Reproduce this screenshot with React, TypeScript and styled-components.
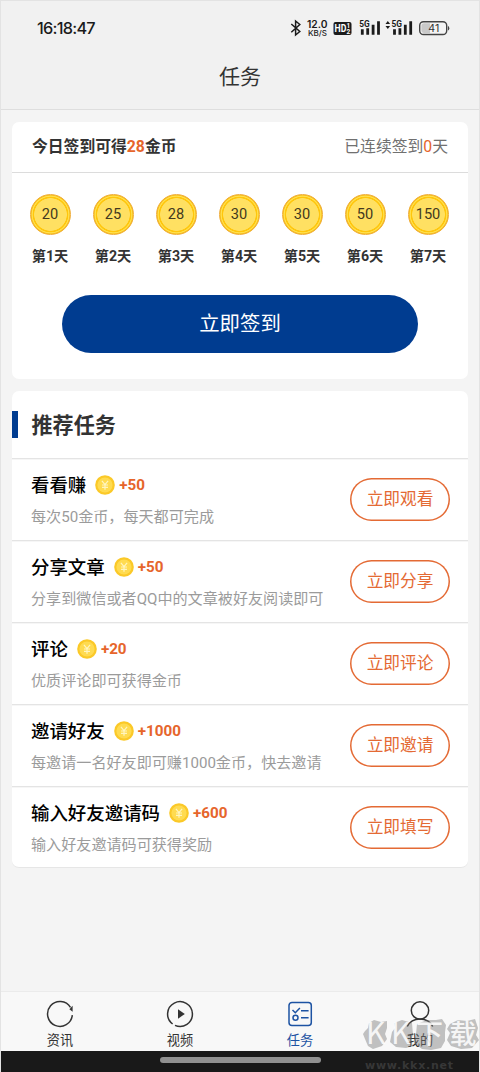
import React from 'react';
import styled, { createGlobalStyle } from 'styled-components';

const GlobalStyle = createGlobalStyle`
  * { box-sizing: border-box; }
  body {
    margin: 0;
    background: #f4f4f4;
    font-family: Roboto, 'Noto Sans CJK SC', sans-serif;
  }
`;

const Screen = styled.div`
  position: relative;
  display: flex;
  flex-direction: column;
  width: 480px;
  height: 1072px;
  overflow: hidden;
  background: #f4f4f4;
  border: 1px solid #e3e3e3;
  border-bottom: 0;
`;

const TopArea = styled.header`
  height: 109px;
  background: #f1f1f1;
  border-bottom: 1px solid #dedede;
`;

const StatusBar = styled.div`
  display: flex;
  align-items: center;
  justify-content: space-between;
  height: 54px;
  padding: 0 29px 0 36px;
`;

const Clock = styled.span`
  font: 500 16.3px/20px Inter, sans-serif;
  letter-spacing: -0.75px;
  color: #1b1b1b;
`;

const StatusIcons = styled.svg`
  display: block;
  width: 160px;
  height: 20px;
`;

const PageTitle = styled.h1`
  margin: 0;
  font-size: 21px;
  font-weight: 400;
  line-height: 45px;
  text-align: center;
  color: #333;
`;

const Content = styled.main`
  flex: 1;
  display: flex;
  flex-direction: column;
  gap: 12px;
  padding: 12px 11px 0;
`;

const Card = styled.section`
  background: #fff;
  border-radius: 7px;
`;

const CheckInCard = styled(Card)`
  height: 257px;
`;

const TaskCard = styled(Card)`
  height: 477px;
  overflow: hidden;
  border-bottom: 1px solid #e6e6e6;
`;

const CheckInHead = styled.div`
  display: flex;
  justify-content: space-between;
  align-items: center;
  height: 51px;
  padding: 0 20px 3px;
  border-bottom: 1px solid #dcdcdc;
`;

const TodayReward = styled.span`
  font-size: 15.8px;
  font-weight: 700;
  color: #333;
`;

const Streak = styled.span`
  font-size: 15.8px;
  color: #707070;
`;

const Accent = styled.span`
  color: #e6652b;
`;

const Days = styled.div`
  display: flex;
  padding: 21px 8px 0 6.5px;
`;

const Day = styled.div`
  width: 63px;
  flex: none;
  display: flex;
  flex-direction: column;
  align-items: center;
`;

const DayCoin = styled.div`
  display: flex;
  align-items: center;
  justify-content: center;
  width: 41px;
  height: 41px;
  padding-bottom: 2px;
  border-radius: 50%;
  border: 1px solid #efad3a;
  background: radial-gradient(circle, #ffe062 0 16px, #ffc60c 16.6px 17.5px, #ffe04e 18.1px 18.5px, #f9c117 19.3px);
  font-size: 14.6px;
  color: #43391f;
`;

const DayLabel = styled.span`
  margin-top: 10px;
  font-size: 14.2px;
  font-weight: 700;
  line-height: 22px;
  color: #333;
`;

const CheckInButton = styled.button`
  display: block;
  width: 356px;
  height: 58px;
  margin: 28px auto 0;
  padding: 0 0 4px;
  border: 0;
  border-radius: 29px;
  background: #003c90;
  font-family: inherit;
  font-size: 20.4px;
  color: #fff;
`;

const SectionHead = styled.div`
  display: flex;
  align-items: center;
  gap: 14px;
  height: 67px;
`;

const SectionMark = styled.span`
  width: 5.5px;
  height: 27px;
  background: #003c90;
`;

const SectionTitle = styled.h2`
  margin: 2px 0 0;
  font-size: 21.1px;
  font-weight: 700;
  line-height: 30px;
  color: #333;
`;

const TaskRow = styled.div`
  display: flex;
  justify-content: space-between;
  align-items: flex-start;
  height: 82px;
  padding: 0 18px 0 19px;
  border-top: 1px solid #e4e4e4;
  box-shadow: inset 0 1px #f6f6f6;
`;

const TaskInfo = styled.div`
  padding-top: 13px;
  white-space: nowrap;
`;

const TaskTitleLine = styled.div`
  display: flex;
  align-items: center;
  height: 26px;
`;

const TaskName = styled.span`
  margin-top: 1px;
  font-size: 18.45px;
  font-weight: 500;
  line-height: 26px;
  color: #000;
`;

const CoinIcon = styled.svg`
  width: 20px;
  height: 20px;
  margin: 0 4px 1px 9px;
`;

const Reward = styled.span`
  font-size: 15.2px;
  font-weight: 700;
  color: #e6652b;
`;

const TaskDesc = styled.div`
  margin-top: 8px;
  font-size: 15.1px;
  line-height: 22px;
  color: #9b9b9b;
`;

const ActionButton = styled.button`
  width: 100px;
  height: 43px;
  margin-top: 19px;
  padding: 0 0 3px;
  border: 0;
  box-shadow: inset 0 0 0 1.5px #e46a34;
  border-radius: 22px;
  background: #fff;
  font-family: inherit;
  font-size: 16.7px;
  color: #e46a34;
`;

const TabBar = styled.nav`
  display: flex;
  height: 60px;
  padding-top: 7px;
  background: #f8f8f8;
  border-top: 1px solid #ebebeb;
  margin: 0 -1px;
`;

const Tab = styled.div<{ $active?: boolean }>`
  flex: 1;
  display: flex;
  flex-direction: column;
  align-items: center;
  font-size: 13.2px;
  line-height: 20px;
  color: ${(p) => (p.$active ? '#1d53a3' : '#333')};

  svg {
    width: 30px;
    height: 30px;
    margin-bottom: 2px;
    fill: none;
    stroke: currentColor;
    stroke-width: 1.5;
  }
`;

const SystemNav = styled.div`
  display: flex;
  justify-content: center;
  height: 21px;
  margin: 0 -1px;
  padding-top: 6px;
  background: #191919;
`;

const HomeHandle = styled.span`
  width: 161px;
  height: 6px;
  border-radius: 3px;
  background: #919191;
`;

const Watermark = styled.svg`
  position: absolute;
  right: -1px;
  bottom: 0;
  width: 120px;
  height: 56px;
  overflow: visible;
  pointer-events: none;
`;

const days = [20, 25, 28, 30, 30, 50, 150];

const tasks = [
  { name: '看看赚', reward: '+50', desc: '每次50金币，每天都可完成', action: '立即观看' },
  { name: '分享文章', reward: '+50', desc: '分享到微信或者QQ中的文章被好友阅读即可', action: '立即分享' },
  { name: '评论', reward: '+20', desc: '优质评论即可获得金币', action: '立即评论' },
  { name: '邀请好友', reward: '+1000', desc: '每邀请一名好友即可赚1000金币，快去邀请', action: '立即邀请' },
  { name: '输入好友邀请码', reward: '+600', desc: '输入好友邀请码可获得奖励', action: '立即填写' },
];

const Coin = () => (
  <CoinIcon viewBox="0 0 20 20">
    <circle cx="10" cy="10" r="9.8" fill="#fbc928" />
    <circle cx="10" cy="10" r="7.6" fill="#ffdb50" />
    <path d="M6.9 5.8 10 9.6l3.1-3.8M10 9.6v5.2M7 10h6M7 12.3h6" fill="none" stroke="#fff5c0" strokeWidth="1.2" />
  </CoinIcon>
);

const SignalIcon = ({ x }: { x: number }) => (
  <g>
    <text x={x} y="7" fontSize="9" fontWeight="700" fontFamily="Roboto" textLength="10.5" lengthAdjust="spacingAndGlyphs">5G</text>
    <path d={`M${x + 3} 9.3v5.4M${x + 8.4} 8.3v6.4M${x + 13.8} 4.8v9.9M${x + 19.2} 1.3v13.4`} stroke="#1b1b1b" strokeWidth="2.8" />
  </g>
);

const StatusGlyphs = () => (
  <StatusIcons viewBox="0 0 160 20" fill="#1b1b1b">
    <path d="m1.3 6 8.5 7.5L5.6 17V3l4.2 3.5-8.5 7.7" fill="none" stroke="#1b1b1b" strokeWidth="1.5" />
    <text x="17" y="10" fontSize="10" fontWeight="600" fontFamily="Inter" textLength="20.5" lengthAdjust="spacingAndGlyphs">12.0</text>
    <text x="18" y="17.7" fontSize="7.8" fontWeight="500" fontFamily="Inter" textLength="19" lengthAdjust="spacingAndGlyphs">KB/S</text>
    <rect x="43.5" y="4" width="18" height="13" rx="2" />
    <text x="44.6" y="14.2" fontSize="10.5" fontWeight="700" fontFamily="Roboto" fill="#fff" textLength="11.8" lengthAdjust="spacingAndGlyphs">HD</text>
    <text x="56.6" y="10" fontSize="6.5" fontWeight="700" fontFamily="Roboto" fill="#fff">1</text>
    <text x="56.6" y="16" fontSize="6.5" fontWeight="700" fontFamily="Roboto" fill="#fff">2</text>
    <g transform="translate(0 2)">
      <SignalIcon x={69.3} />
      <SignalIcon x={101.5} />
      <path d="m95.5 4 2.3-3 2.3 3zM95.5 6l2.3 3 2.3-3z" />
    </g>
    <rect x="129.7" y="3.7" width="27" height="12.8" rx="3.8" fill="#f4f4f4" stroke="#444" strokeWidth="1.4" />
    <path d="M134 5.3h6v9.6h-6q-2.6 0-2.6-2.6V7.9q0-2.6 2.6-2.6z" fill="#c9c9c9" />
    <path d="M158 8q1.3.3 1.3 2.3t-1.3 2.3z" fill="#444" />
    <text x="138.3" y="14" fontSize="10.5" fontFamily="Inter" fill="#333" textLength="11" lengthAdjust="spacingAndGlyphs">41</text>
  </StatusIcons>
);

export default function App() {
  return (
    <>
      <GlobalStyle />
      <Screen>
        <TopArea>
          <StatusBar>
            <Clock>16:18:47</Clock>
            <StatusGlyphs />
          </StatusBar>
          <PageTitle>任务</PageTitle>
        </TopArea>
        <Content>
          <CheckInCard>
            <CheckInHead>
              <TodayReward>今日签到可得<Accent>28</Accent>金币</TodayReward>
              <Streak>已连续签到<Accent>0</Accent>天</Streak>
            </CheckInHead>
            <Days>
              {days.map((amount, i) => (
                <Day key={i}>
                  <DayCoin>{amount}</DayCoin>
                  <DayLabel>第{i + 1}天</DayLabel>
                </Day>
              ))}
            </Days>
            <CheckInButton>立即签到</CheckInButton>
          </CheckInCard>
          <TaskCard>
            <SectionHead>
              <SectionMark />
              <SectionTitle>推荐任务</SectionTitle>
            </SectionHead>
            {tasks.map((task) => (
              <TaskRow key={task.name}>
                <TaskInfo>
                  <TaskTitleLine>
                    <TaskName>{task.name}</TaskName>
                    <Coin />
                    <Reward>{task.reward}</Reward>
                  </TaskTitleLine>
                  <TaskDesc>{task.desc}</TaskDesc>
                </TaskInfo>
                <ActionButton>{task.action}</ActionButton>
              </TaskRow>
            ))}
          </TaskCard>
        </Content>
        <TabBar>
          <Tab>
            <svg viewBox="0 0 30 30">
              <path d="M27.3 16.2A12.4 12.4 0 1 1 25.500 8.4" />
              <path d="M27.600 6.800v6l-3.200-2.600z" fill="currentColor" stroke="none" />
            </svg>
            资讯
          </Tab>
          <Tab>
            <svg viewBox="0 0 30 30">
              <path d="M7.600 25A12.400 12.400 0 1 1 10 26.400M5.800 23.300 4.600 21.800" />
              <path d="m13 10.300 6.800 4.700-6.800 4.700z" fill="currentColor" stroke="none" />
            </svg>
            视频
          </Tab>
          <Tab $active>
            <svg viewBox="0 0 30 30">
              <rect x="4" y="3.500" width="22.300" height="23" rx="3" />
              <path d="m7.500 11 2.800 2.700 4.600-4.700M16 11.800h7.600M16 18.800h7.600" />
              <circle cx="10.500" cy="18.800" r="2.500" />
            </svg>
            任务
          </Tab>
          <Tab>
            <svg viewBox="0 0 30 30">
              <circle cx="15" cy="11.500" r="8.700" />
              <path d="M2.300 27.500c2.500-5 7-7.400 12.700-7.400s10.200 2.400 12.700 7.400" />
            </svg>
            我的
          </Tab>
        </TabBar>
        <SystemNav>
          <HomeHandle />
        </SystemNav>
        <Watermark viewBox="0 0 120 56">
          <g fill="#777" fillOpacity=".43">
            <path d="m9 7 5-3 7 2 6-1v7l-2 6 2 5-5 7-9 3-5-3-3-7-2-5 2-3 3-3z" />
            <path d="m34 7 8-3 10 3 1 12-2 5 2 6-7 2-10-1-6-5 2-10 3-4z" />
            <path d="m57 8 10-4 9 0 6-1 4 6-1 7 0 9-4 7-10 2-9-1-8-6 2-9z" />
            <path d="m90 8 8-4 9 1 8-2 3 9-2 7 3 5-7 8-11 1-10-3-4-6 3-7-3-4z" />
          </g>
          <g fill="#fff" fillOpacity=".85" fontFamily="'Noto Sans CJK SC', sans-serif">
            <text x="6" y="27.5" fontSize="30" fontWeight="400">K</text>
            <text x="31" y="27.5" fontSize="30" fontWeight="400">K</text>
            <text x="56" y="28" fontSize="27" fontWeight="500">下</text>
            <text x="89.5" y="28" fontSize="27" fontWeight="500">载</text>
          </g>
          <text x="5" y="53" fontSize="11" fontWeight="700" fontFamily="DejaVu Sans" fill="#373737" textLength="88">www.kkx.net</text>
        </Watermark>
      </Screen>
    </>
  );
}
